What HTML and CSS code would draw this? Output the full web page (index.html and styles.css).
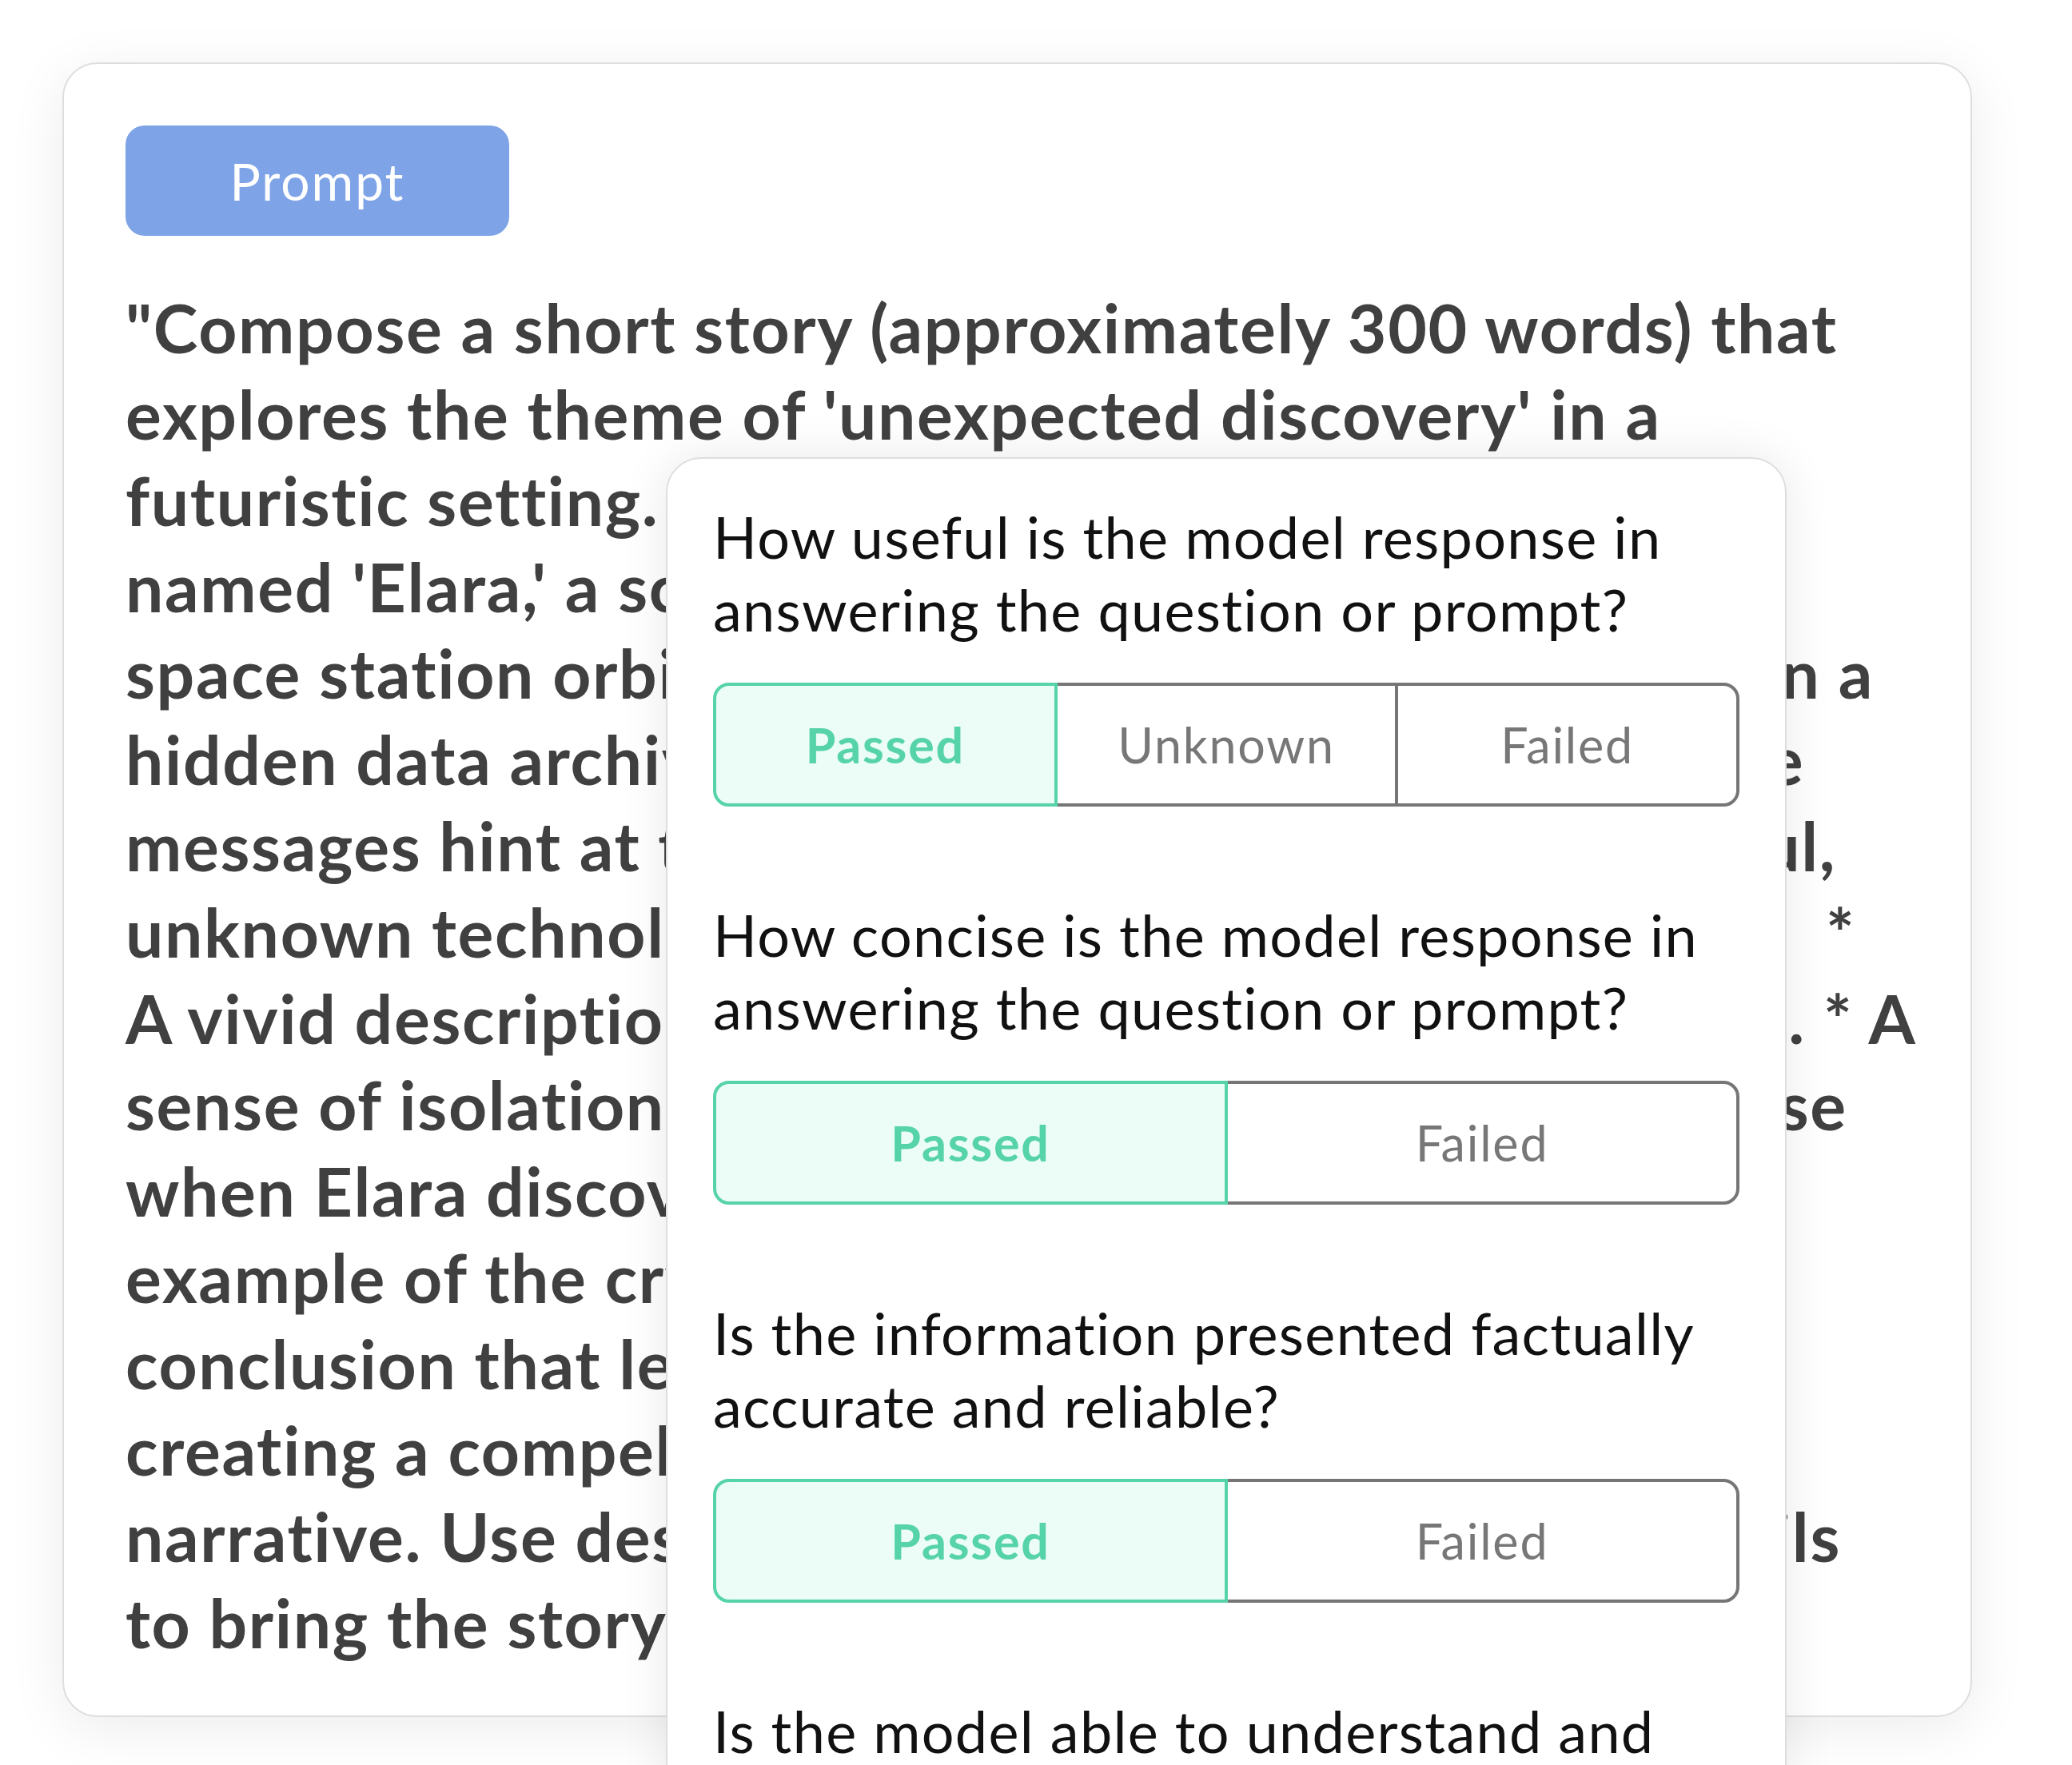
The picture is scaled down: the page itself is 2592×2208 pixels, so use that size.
FILE: index.html
```html
<!DOCTYPE html>
<html lang="en">
<head>
	<meta charset="UTF-8">
	<title>Prompt review</title>
	<link rel="stylesheet" href="styles.css">
</head>
<body>
	<div class="page">
		<div class="prompt-card">
			<div class="tag">Prompt</div>
			<p class="prompt-text">"Compose a short story (approximately 300 words) that<br>
				explores the theme of 'unexpected discovery' in a<br>
				futuristic setting. The story should feature a heroine<br>
				named 'Elara,' a scientist living alone on a remote<br>
				space station orbiting a dying star, who stumbled upon a<br>
				hidden data archive containing obscure messages. The<br>
				messages hint at the existence of an unusual, powerful,<br>
				unknown technology. Your short story should include: &nbsp;*<br>
				A vivid description of the space station's environment. * A<br>
				sense of isolation, and mystery that heightens suspense<br>
				when Elara discovers the archive. * At least one<br>
				example of the cryptic messages. * A satisfying<br>
				conclusion that leaves the reader wondering,<br>
				creating a compelling and thought-provoking<br>
				narrative. Use descriptive language, and sensory details<br>
				to bring the story to life."</p>
		</div>

		<!-- rating panel sits over the prompt card -->
		<div class="rating-panel">
			<div class="question">
				<p class="question-title">How useful is the model response in answering the question or prompt?</p>
				<div class="choices">
					<span class="choice selected">Passed</span>
					<span class="choice">Unknown</span>
					<span class="choice">Failed</span>
				</div>
			</div>
			<div class="question">
				<p class="question-title">How concise is the model response in answering the question or prompt?</p>
				<div class="choices">
					<span class="choice selected">Passed</span>
					<span class="choice">Failed</span>
				</div>
			</div>
			<div class="question">
				<p class="question-title">Is the information presented factually accurate and reliable?</p>
				<div class="choices">
					<span class="choice selected">Passed</span>
					<span class="choice">Failed</span>
				</div>
			</div>
			<div class="question">
				<p class="question-title">Is the model able to understand and follow the instructions in the prompt?</p>
				<div class="choices">
					<span class="choice selected">Passed</span>
					<span class="choice">Failed</span>
				</div>
			</div>
		</div>
	</div>
</body>
</html>
```

FILE: styles.css
```css
html,body,div,p,span{
	padding: 0;
	margin: 0;
	border: 0;
}
html,body{
	height: 100%;
	overflow: hidden;
	background-color: #fff;
}
body{
	font-family: Lato, "Open Sans", sans-serif;
}
.page{
	position: relative;
	padding: 78px 125px 0 78px;
}
.prompt-card{
	padding: 77px 77px 62px 77px;
	border: 2px solid #dedede;
	border-radius: 44px;
	background-color: #fff;
	box-shadow: 0 14px 70px rgba(0,0,0,0.08);
}
.tag{
	display: flex;
	align-items: center;
	justify-content: center;
	width: 480px;
	height: 138px;
	border-radius: 24px;
	background-color: #7ea4e7;
	color: #fff;
	font-size: 64px;
	letter-spacing: 2px;
}
.prompt-text{
	margin-top: 61px;
	font-size: 84px;
	font-weight: 700;
	line-height: 108px;
	letter-spacing: 1.65px;
	color: #404040;
	white-space: nowrap;
}
.rating-panel{
	position: absolute;
	left: 833px;
	top: 572px;
	width: 1402px;
	box-sizing: border-box;
	padding: 52px 57px;
	border: 2px solid #dedede;
	border-radius: 44px;
	background-color: #fff;
	box-shadow: 0 0 60px rgba(0,0,0,0.09);
}
.question{
	margin-bottom: 115px;
}
.question-title{
	font-size: 72px;
	line-height: 91px;
	letter-spacing: 1.3px;
	color: #111;
}
.choices{
	display: flex;
	margin-top: 46px;
}
.choice{
	flex: 1;
	display: flex;
	align-items: center;
	justify-content: center;
	height: 155px;
	box-sizing: border-box;
	border: 4px solid #767676;
	color: #777;
	font-size: 61px;
	letter-spacing: 1.8px;
	background-color: #fff;
}
.choice + .choice{
	margin-left: -4px;
}
.choice:first-child{
	border-radius: 20px 0 0 20px;
}
.choice:last-child{
	border-radius: 0 20px 20px 0;
}
.choice.selected{
	position: relative;
	z-index: 1;
	border-color: #56d3a8;
	background-color: #ebfdf6;
	color: #56d3a8;
	font-weight: 700;
}
```
